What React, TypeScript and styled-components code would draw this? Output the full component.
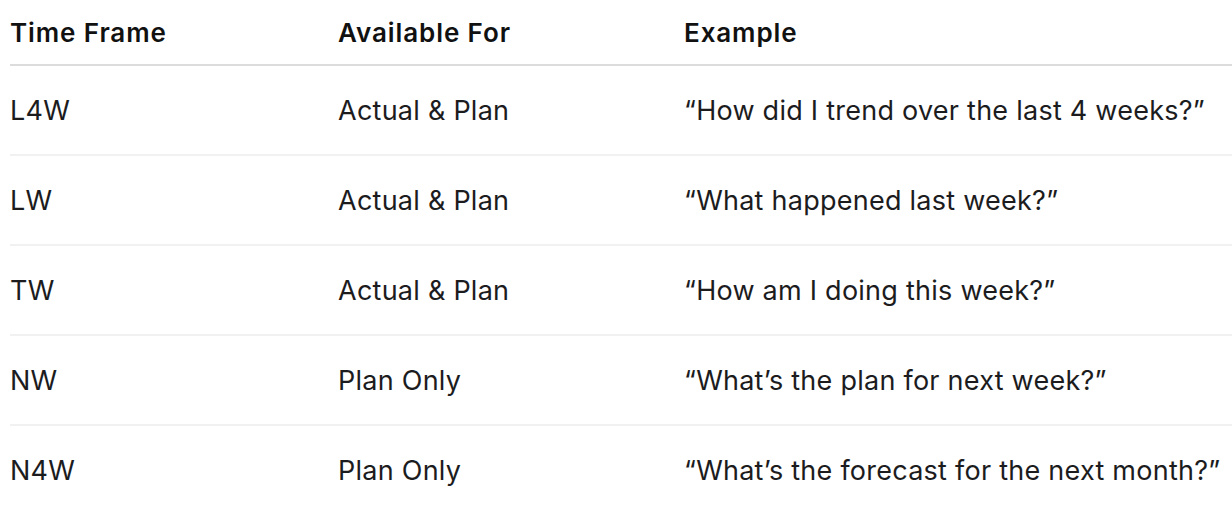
import React from "react";
import styled, { createGlobalStyle } from "styled-components";

const Global = createGlobalStyle`
  html, body { margin: 0; padding: 0; background: #ffffff; }
  body { font-family: Inter, "Noto Sans", sans-serif; color: #1c1c1e; }
`;

const Table = styled.div`
  margin-left: 10px;
  display: flex;
  flex-direction: column;
`;

const Row = styled.div<{ $header?: boolean; $last?: boolean }>`
  display: grid;
  grid-template-columns: 328px 346px 1fr;
  align-items: center;
  height: ${(p) => (p.$header ? "64px" : "88px")};
  border-bottom: ${(p) =>
    p.$last ? "none" : p.$header ? "2px solid #dcdcdc" : "2px solid #f1f1f1"};
`;

const Cell = styled.div<{ $header?: boolean }>`
  font-size: ${(p) => (p.$header ? "26px" : "27px")};
  font-weight: ${(p) => (p.$header ? 600 : 400)};
  color: ${(p) => (p.$header ? "#111111" : "#1c1c1e")};
  white-space: nowrap;
  letter-spacing: ${(p) => (p.$header ? "0.9px" : "0.25px")};
`;

const rows = [
  ["L4W", "Actual & Plan", "“How did I trend over the last 4 weeks?”"],
  ["LW", "Actual & Plan", "“What happened last week?”"],
  ["TW", "Actual & Plan", "“How am I doing this week?”"],
  ["NW", "Plan Only", "“What’s the plan for next week?”"],
  ["N4W", "Plan Only", "“What’s the forecast for the next month?”"],
];

export default function App() {
  return (
    <>
      <Global />
      <Table>
        <Row $header>
          <Cell $header>Time Frame</Cell>
          <Cell $header>Available For</Cell>
          <Cell $header>Example</Cell>
        </Row>
        {rows.map((r, i) => (
          <Row key={r[0]} $last={i === rows.length - 1}>
            <Cell>{r[0]}</Cell>
            <Cell>{r[1]}</Cell>
            <Cell>{r[2]}</Cell>
          </Row>
        ))}
      </Table>
    </>
  );
}
